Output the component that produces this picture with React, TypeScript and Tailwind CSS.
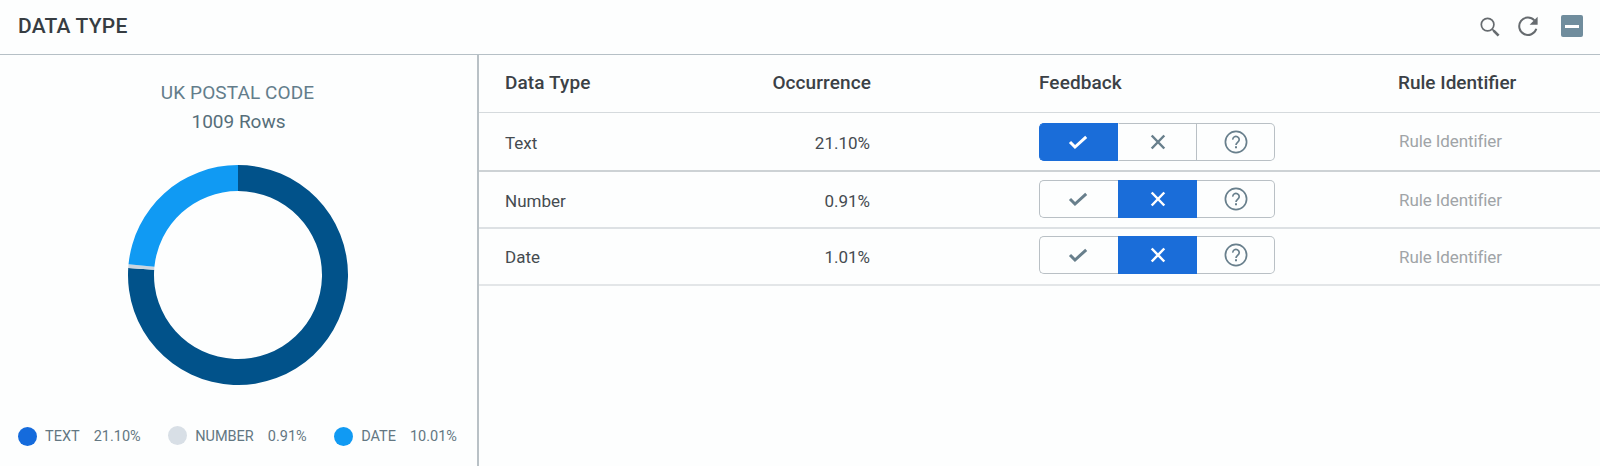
import clsx from "clsx";

type Choice = "yes" | "no" | "unsure";

type Row = {
  name: string;
  occurrence: string;
  feedback: Choice;
  className: string;
  textClassName: string;
  ruleClassName: string;
};

const rows: Row[] = [
  {
    name: "Text",
    occurrence: "21.10%",
    feedback: "yes",
    className: "h-[59px] border-b-2 border-[#cdd2d5] pt-px",
    textClassName: "pt-1",
    ruleClassName: "pb-px",
  },
  {
    name: "Number",
    occurrence: "0.91%",
    feedback: "no",
    className: "h-[57px] border-b-2 border-[#dde1e4] pb-px",
    textClassName: "pt-[5px]",
    ruleClassName: "pt-[3px]",
  },
  {
    name: "Date",
    occurrence: "1.01%",
    feedback: "no",
    className: "h-[57px] border-b-2 border-[#e3e6e8] pb-1",
    textClassName: "pt-1.5",
    ruleClassName: "pt-1.5",
  },
];

const legend = [
  { label: "TEXT", value: "21.10%", dot: "bg-[#156bdc]" },
  { label: "NUMBER", value: "0.91%", dot: "bg-[#d8dfe6] mb-0.5" },
  { label: "DATE", value: "10.01%", dot: "bg-[#109af3]" },
];

const slices = [
  { color: "#01528a", from: 0, to: 273.6 },
  { color: "#cbd5df", from: 273.6, to: 275.6 },
  { color: "#109af3", from: 275.6, to: 360 },
];

function point(radius: number, angle: number) {
  const rad = ((angle - 90) * Math.PI) / 180;
  return `${110 + radius * Math.cos(rad)} ${110 + radius * Math.sin(rad)}`;
}

function slicePath(from: number, to: number) {
  const large = to - from > 180 ? 1 : 0;
  return `M${point(110, from)} A110 110 0 ${large} 1 ${point(110, to)} L${point(84, to)} A84 84 0 ${large} 0 ${point(84, from)} Z`;
}

function Donut() {
  return (
    <svg width="220" height="220" viewBox="0 0 220 220">
      {slices.map((s) => (
        <path key={s.color} d={slicePath(s.from, s.to)} fill={s.color} />
      ))}
    </svg>
  );
}

function SearchIcon() {
  return (
    <svg width="20" height="20" viewBox="0 0 20 20" fill="none" stroke="currentColor">
      <circle cx="7.6" cy="7.6" r="6.3" strokeWidth="1.7" />
      <path d="M12.2 12.2l1.8 1.8" strokeWidth="1.7" />
      <path d="M13.6 13.6l5 5" strokeWidth="2.7" />
    </svg>
  );
}

function RefreshIcon() {
  return (
    <svg width="20" height="20" viewBox="0 0 20 20" fill="none" stroke="currentColor">
      <path d="M16.4 4.4A8.7 8.7 0 1 0 18.3 12.7" strokeWidth="2" />
      <path d="M19.6 0.8v8h-8z" fill="currentColor" stroke="none" />
    </svg>
  );
}

function CheckIcon() {
  return (
    <svg width="20" height="16" viewBox="0 0 20 16" fill="none" stroke="currentColor" strokeWidth="3">
      <path d="M2 8l5 5L18.2 2.8" />
    </svg>
  );
}

function CrossIcon() {
  return (
    <svg width="16" height="16" viewBox="0 0 16 16" fill="none" stroke="currentColor" strokeWidth="2.5">
      <path d="M1.7 1.5l12.6 13M14.3 1.5l-12.6 13" />
    </svg>
  );
}

function HelpIcon() {
  return (
    <svg width="24" height="24" viewBox="0 0 24 24" fill="none" stroke="currentColor" strokeWidth="1.7">
      <circle cx="12" cy="12" r="10.6" />
      <path d="M8.8 9.6a3.2 3.1 0 1 1 5.2 2.3c-1.2 1-2 1.6-2 3" />
      <path d="M12 16.2v2" strokeWidth="2" />
    </svg>
  );
}

function Feedback({ value }: { value: Choice }) {
  const active = "border-[#1a6dd9] bg-[#1a6dd9] text-white";
  const idle = "border-[#b9c0c5]";
  return (
    <div className="flex h-[38px] w-[236px] text-[#687f8c]">
      <button
        className={clsx(
          "flex w-[79px] items-center justify-center rounded-l-[5px] border border-r-0 pr-0.5",
          value === "yes" ? active : idle,
        )}
      >
        <CheckIcon />
      </button>
      <button
        className={clsx(
          "flex w-[79px] items-center justify-center border pl-px",
          value === "no" ? active : "border-[#b9c0c5] border-l-[#fdfefe]",
        )}
      >
        <CrossIcon />
      </button>
      <button
        className={clsx(
          "flex flex-1 items-center justify-center rounded-r-[5px] border border-l-0",
          value === "unsure" ? active : idle,
        )}
      >
        <HelpIcon />
      </button>
    </div>
  );
}

function Header() {
  return (
    <header className="flex h-[55px] items-center border-b border-[#b6c0c6] pr-[17px] pl-[18px]">
      <h1 className="flex-1 pb-px text-[21px] font-medium tracking-[0.2px] text-[#373d42]">DATA TYPE</h1>
      <div className="flex items-center pb-0.5 text-[#666b6f]">
        <span className="mr-[18px] pt-0.5">
          <SearchIcon />
        </span>
        <span className="mr-[23px]">
          <RefreshIcon />
        </span>
        <button className="flex size-[22px] items-center justify-center rounded-[2px] bg-[#708d9d]">
          <span className="h-[3px] w-3.5 bg-white" />
        </button>
      </div>
    </header>
  );
}

function Summary() {
  return (
    <section className="flex w-[479px] flex-col border-r-2 border-[#b9c1c6] text-[#637d8b]">
      <div className="pt-[23px] pr-0.5 text-center text-[19px] leading-[29px]">
        <div className="tracking-[0.1px]">UK POSTAL CODE</div>
        <div className="pl-0.5 text-[#566e7a]">1009 Rows</div>
      </div>
      <div className="flex justify-center pt-[29px] pr-0.5">
        <Donut />
      </div>
      <div className="flex justify-between pt-[41px] pr-5 pl-[18px] text-[14.5px] leading-5 text-[#637782]">
        {legend.map((item) => (
          <div key={item.label} className="flex items-center">
            <span className={clsx("mr-2 size-[19px] rounded-full", item.dot)} />
            <span className="mr-3.5">{item.label}</span>
            <span>{item.value}</span>
          </div>
        ))}
      </div>
    </section>
  );
}

function Table() {
  return (
    <section className="flex-1 text-[17px] text-[#454b50]">
      <div className="flex h-[58px] items-center border-b border-[#d5dadd] text-[19px] font-medium text-[#3b4146]">
        <div className="w-[246px] pl-[26px] tracking-[0.1px]">Data Type</div>
        <div className="w-[146px] text-right tracking-[0.1px]">Occurrence</div>
        <div className="w-[527px] pl-[168px] tracking-[0.1px]">Feedback</div>
        <div>Rule Identifier</div>
      </div>
      {rows.map((row) => (
        <div key={row.name} className={clsx("flex items-center", row.className)}>
          <div className={clsx("w-[246px] pl-[26px]", row.textClassName)}>{row.name}</div>
          <div className={clsx("w-[145px] text-right", row.textClassName)}>{row.occurrence}</div>
          <div className="w-[529px] pl-[169px]">
            <Feedback value={row.feedback} />
          </div>
          <div className={clsx("tracking-[-0.1px] text-[#a0a4a7]", row.ruleClassName)}>Rule Identifier</div>
        </div>
      ))}
    </section>
  );
}

export default function App() {
  return (
    <div className="flex h-[466px] w-[1600px] flex-col bg-[#fdfefe] font-[Roboto,sans-serif]">
      <Header />
      <main className="flex flex-1">
        <Summary />
        <Table />
      </main>
    </div>
  );
}
